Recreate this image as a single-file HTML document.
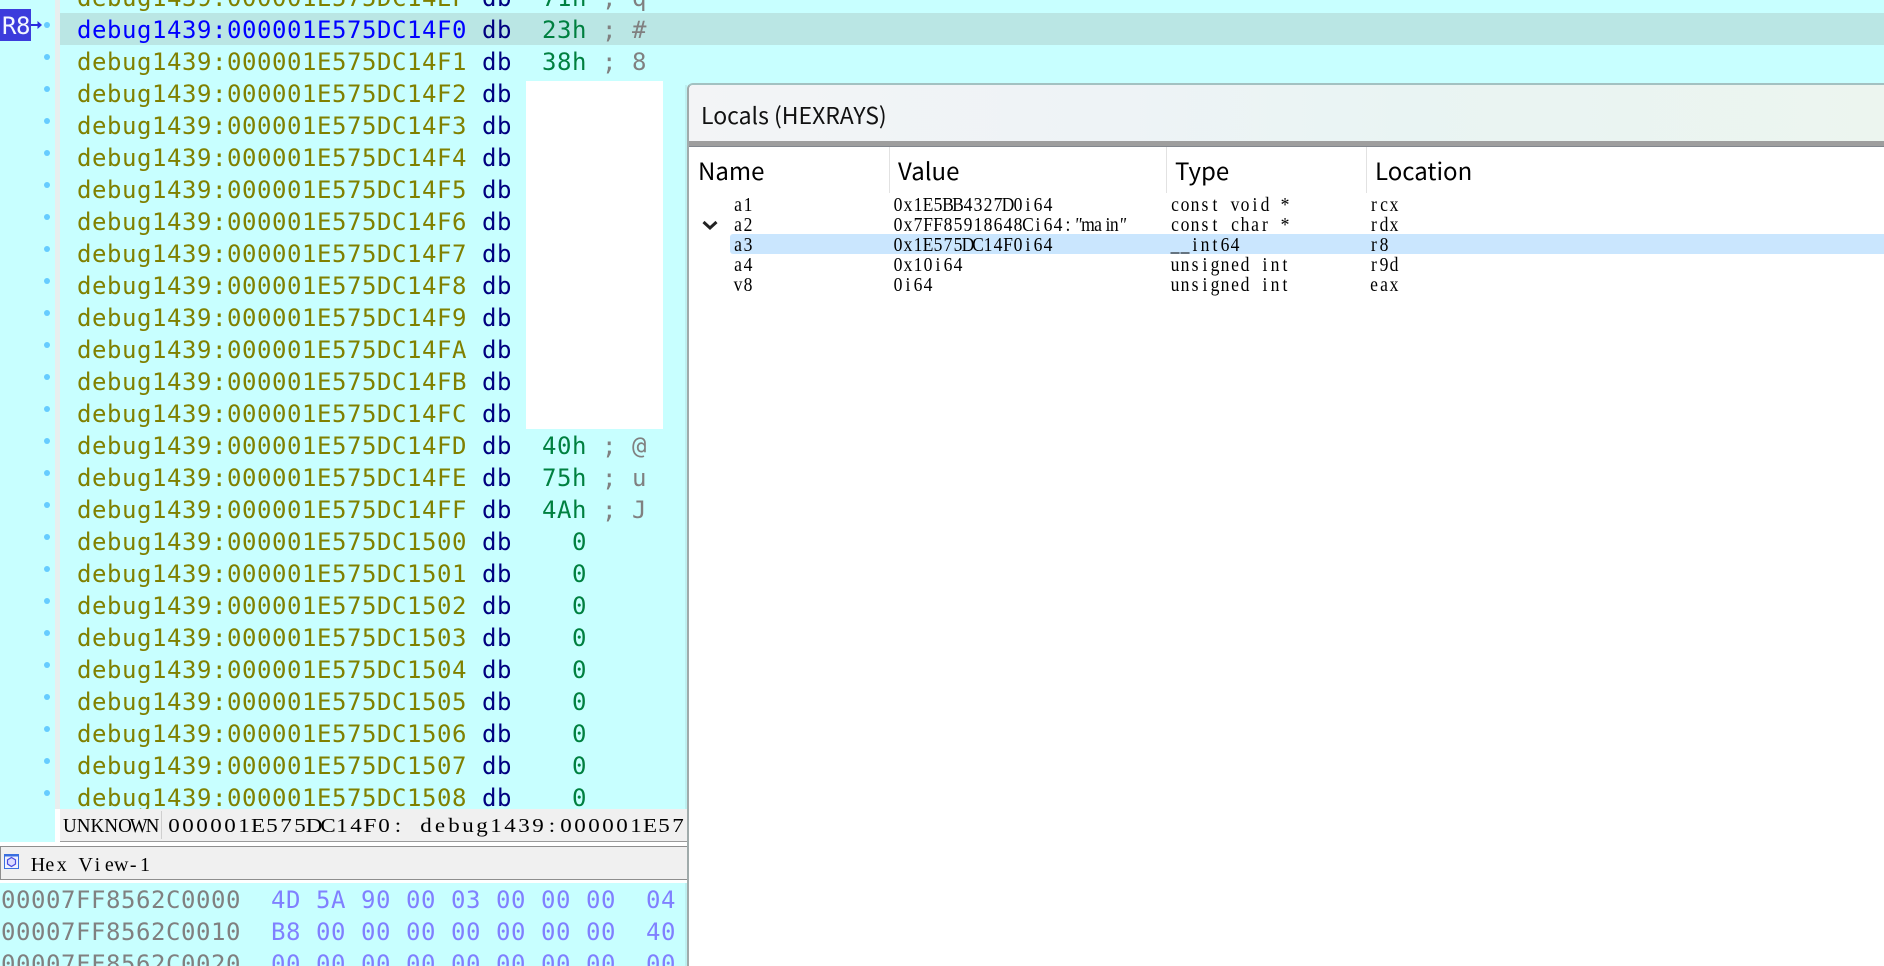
<!DOCTYPE html>
<html>
<head>
<meta charset="utf-8">
<title>Locals (HEXRAYS)</title>
<style>
html,body{margin:0;padding:0;background:#fff;}
#page{position:relative;width:1884px;height:966px;overflow:hidden;background:#fff;}
.abs{position:absolute;}
pre{margin:0;font-family:"DejaVu Sans Mono",monospace;font-size:24px;line-height:32px;letter-spacing:.55px;}
.a{color:#808000}.d{color:#000080}.g{color:#008040}.c{color:#808080}.b{color:#0000ff}.h{color:#8080ff}
.dot{position:absolute;left:44px;width:6px;height:6px;border-radius:50%;background:#66ccff;}
text{white-space:pre;}
.ss{font-family:"Liberation Serif",serif;font-size:20px;fill:#000;text-anchor:middle;}
.hd{position:absolute;top:154px;font-family:"Noto Sans CJK SC","Liberation Sans",sans-serif;font-size:24px;line-height:32px;color:#000;}
.vd{position:absolute;top:147px;width:1px;height:46px;background:#e2e2e2;}
</style>
</head>
<body>
<div id="page">
  <!-- left gutter -->
  <div class="abs" style="left:0;top:0;width:55px;height:842px;background:#c8ffff;"></div>
  <div class="abs" style="left:55px;top:0;width:5px;height:809px;background:#e8eeee;"></div>
  <!-- code area -->
  <div class="abs" style="left:60px;top:0;width:1824px;height:809px;background:#c8ffff;overflow:hidden;">
    <div class="abs" style="left:0;top:13px;width:1824px;height:32px;background:#bae6e4;"></div>
    <pre class="abs" style="left:17px;top:-18px;"><span class="a">debug1439:000001E575DC14EF</span> <span class="d">db</span>  <span class="g">71h</span> <span class="c">; q</span>
<span class="b">debug1439:000001E575DC14F0</span> <span class="d">db</span>  <span class="g">23h</span> <span class="c">; #</span>
<span class="a">debug1439:000001E575DC14F1</span> <span class="d">db</span>  <span class="g">38h</span> <span class="c">; 8</span>
<span class="a">debug1439:000001E575DC14F2</span> <span class="d">db</span>
<span class="a">debug1439:000001E575DC14F3</span> <span class="d">db</span>
<span class="a">debug1439:000001E575DC14F4</span> <span class="d">db</span>
<span class="a">debug1439:000001E575DC14F5</span> <span class="d">db</span>
<span class="a">debug1439:000001E575DC14F6</span> <span class="d">db</span>
<span class="a">debug1439:000001E575DC14F7</span> <span class="d">db</span>
<span class="a">debug1439:000001E575DC14F8</span> <span class="d">db</span>
<span class="a">debug1439:000001E575DC14F9</span> <span class="d">db</span>
<span class="a">debug1439:000001E575DC14FA</span> <span class="d">db</span>
<span class="a">debug1439:000001E575DC14FB</span> <span class="d">db</span>
<span class="a">debug1439:000001E575DC14FC</span> <span class="d">db</span>
<span class="a">debug1439:000001E575DC14FD</span> <span class="d">db</span>  <span class="g">40h</span> <span class="c">; @</span>
<span class="a">debug1439:000001E575DC14FE</span> <span class="d">db</span>  <span class="g">75h</span> <span class="c">; u</span>
<span class="a">debug1439:000001E575DC14FF</span> <span class="d">db</span>  <span class="g">4Ah</span> <span class="c">; J</span>
<span class="a">debug1439:000001E575DC1500</span> <span class="d">db</span>    <span class="g">0</span>
<span class="a">debug1439:000001E575DC1501</span> <span class="d">db</span>    <span class="g">0</span>
<span class="a">debug1439:000001E575DC1502</span> <span class="d">db</span>    <span class="g">0</span>
<span class="a">debug1439:000001E575DC1503</span> <span class="d">db</span>    <span class="g">0</span>
<span class="a">debug1439:000001E575DC1504</span> <span class="d">db</span>    <span class="g">0</span>
<span class="a">debug1439:000001E575DC1505</span> <span class="d">db</span>    <span class="g">0</span>
<span class="a">debug1439:000001E575DC1506</span> <span class="d">db</span>    <span class="g">0</span>
<span class="a">debug1439:000001E575DC1507</span> <span class="d">db</span>    <span class="g">0</span>
<span class="a">debug1439:000001E575DC1508</span> <span class="d">db</span>    <span class="g">0</span></pre>
    <div class="abs" style="left:466px;top:81px;width:137px;height:348px;background:#fff;"></div>
  </div>
  <!-- dots -->
  <div class="dot" style="top:22px"></div><div class="dot" style="top:54px"></div><div class="dot" style="top:86px"></div><div class="dot" style="top:118px"></div>
  <div class="dot" style="top:150px"></div><div class="dot" style="top:182px"></div><div class="dot" style="top:214px"></div><div class="dot" style="top:246px"></div>
  <div class="dot" style="top:278px"></div><div class="dot" style="top:310px"></div><div class="dot" style="top:342px"></div><div class="dot" style="top:374px"></div>
  <div class="dot" style="top:406px"></div><div class="dot" style="top:438px"></div><div class="dot" style="top:470px"></div><div class="dot" style="top:502px"></div>
  <div class="dot" style="top:534px"></div><div class="dot" style="top:566px"></div><div class="dot" style="top:598px"></div><div class="dot" style="top:630px"></div>
  <div class="dot" style="top:662px"></div><div class="dot" style="top:694px"></div><div class="dot" style="top:726px"></div><div class="dot" style="top:758px"></div>
  <div class="dot" style="top:790px"></div>
  <!-- R8 -->
  <div class="abs" style="left:0;top:9px;width:31px;height:32px;background:#3c3cdc;"></div>
  <pre class="abs" style="left:2px;top:10px;color:#f4f8ff;letter-spacing:-.4px;">R8</pre>
  <svg class="abs" style="left:31px;top:18px" width="12" height="14" viewBox="0 0 12 14"><path d="M0 7H9" stroke="#2a2ae0" stroke-width="2" fill="none"/><path d="M6.5 3L11 7L6.5 11Z" fill="#2a2ae0"/></svg>
  <!-- status bar -->
  <div class="abs" style="left:60px;top:809px;width:628px;height:32px;background:#f0f0f0;overflow:hidden;">
    <div class="abs" style="left:101px;top:2px;width:1px;height:28px;background:#cfcfcf;"></div>
    <svg class="abs" style="left:0;top:0" width="628" height="32">
      <text class="ss" transform="translate(3,23) scale(.95,1)" x="7.25 21.75 36.25 50.75 65.25 79.75 94.25">UNKNOWN</text>
      <text class="ss" transform="translate(107,23) scale(1.15,1)" x="6.09 18.26 30.43 42.61 54.78 66.96 79.13 91.3 103.48 115.65 127.83 140 152.17 164.35 176.52 188.7 200.87 213.04 225.22 237.39 249.57 261.74 273.91 286.09 298.26 310.43 322.61 334.78 346.96 359.13 371.3 383.48 395.65 407.83 420 432.17 444.35 456.52">000001E575DC14F0: debug1439:000001E575</text>
    </svg>
  </div>
  <div class="abs" style="left:60px;top:841px;width:628px;height:1px;background:#9a9a9a;"></div>
  <!-- hex view title -->
  <div class="abs" style="left:0;top:846px;width:688px;background:#f0f0f0;border-top:1px solid #8e8e8e;border-bottom:1px solid #8e8e8e;border-left:1px solid #8e8e8e;box-sizing:border-box;height:34px;"></div>
  <svg class="abs" style="left:4px;top:854px" width="15" height="15" viewBox="0 0 15 15">
    <rect x=".5" y=".5" width="14" height="14" fill="#eef2ff" stroke="#3a6fe0"/>
    <rect x="0" y="0" width="15" height="2.5" fill="#3a6fe0"/>
    <path d="M7.5 3.5L11.5 5.8V10L7.5 12.5L3.5 10V5.8Z" fill="#dcdcff" stroke="#4a4ae0" stroke-width="1.2"/>
  </svg>
  <svg class="abs" style="left:0;top:846px" width="300" height="34">
    <text class="ss" transform="translate(32,25)" x="5.95 17.85 29.75 41.65 53.55 65.45 77.35 89.25 101.15 113.05">Hex View-1</text>
  </svg>
  <!-- hex rows -->
  <div class="abs" style="left:0;top:883px;width:688px;height:83px;background:#c8ffff;overflow:hidden;">
    <pre class="abs" style="left:1px;top:1px;"><span class="c">00007FF8562C0000</span>  <span class="h">4D 5A 90 00 03 00 00 00  04</span>
<span class="c">00007FF8562C0010</span>  <span class="h">B8 00 00 00 00 00 00 00  40</span>
<span class="c">00007FF8562C0020</span>  <span class="h">00 00 00 00 00 00 00 00  00</span></pre>
  </div>
  <!-- locals panel -->
  <div class="abs" style="left:685px;top:85px;width:2px;height:724px;background:#bdf0f0;"></div>
  <div class="abs" style="left:685px;top:883px;width:2px;height:83px;background:#bdf0f0;"></div>
  <div class="abs" style="left:687px;top:83px;width:1197px;height:883px;background:#fff;border-left:2px solid #a0abab;border-top:2px solid #a3c1c1;box-sizing:border-box;border-top-left-radius:6px;"></div>
  <div class="abs" style="left:689px;top:85px;width:1195px;height:56px;background:linear-gradient(90deg,#f3f4f6 0%,#eef3f6 35%,#e9f4f3 60%,#ecf5ef 100%);border-top-left-radius:5px;"></div>
  <div class="abs" style="left:689px;top:141px;width:1195px;height:5px;background:#9e9e9e;"></div>
  <div class="abs" style="left:689px;top:146px;width:1195px;height:1px;background:#82878e;"></div>
  <div class="abs" style="left:701px;top:96px;font-family:'Noto Sans CJK SC','Liberation Sans',sans-serif;font-size:23px;line-height:36px;color:#111;">Locals (HEXRAYS)</div>
  <div class="vd" style="left:889px"></div><div class="vd" style="left:1166px"></div><div class="vd" style="left:1366px"></div>
  <div class="hd" style="left:698px">Name</div>
  <div class="hd" style="left:898px">Value</div>
  <div class="hd" style="left:1175px">Type</div>
  <div class="hd" style="left:1375px">Location</div>
  <div class="abs" style="left:730px;top:234px;width:1154px;height:20px;background:#cae6fe;border-radius:3px 0 0 3px;"></div>
  <svg class="abs" style="left:0;top:0" width="1884" height="966">
    <path d="M703.5 222L710 228L716.5 222" fill="none" stroke="#222" stroke-width="3"/>
    <g>
      <text class="ss" transform="translate(733,211) scale(.88,1)" x="5.68 17.05">a1</text>
      <text class="ss" transform="translate(733,231) scale(.88,1)" x="5.68 17.05">a2</text>
      <text class="ss" transform="translate(733,251) scale(.88,1)" x="5.68 17.05">a3</text>
      <text class="ss" transform="translate(733,271) scale(.88,1)" x="5.68 17.05">a4</text>
      <text class="ss" transform="translate(733,291) scale(.88,1)" x="5.68 17.05">v8</text>

      <text class="ss" transform="translate(893,211) scale(.88,1)" x="5.68 17.05 28.41 39.77 51.14 62.5 73.86 85.23 96.59 107.95 119.32 130.68 142.05 153.41 164.77 176.14">0x1E5BB4327D0i64</text>
      <text class="ss" transform="translate(893,231) scale(.88,1)" x="5.68 17.05 28.41 39.77 51.14 62.5 73.86 85.23 96.59 107.95 119.32 130.68 142.05 153.41 164.77 176.14 187.5 198.86 210.23 221.59 232.95 244.32 255.68">0x7FF85918648Ci64:<tspan font-style="italic">"</tspan>main<tspan font-style="italic">"</tspan></text>
      <text class="ss" transform="translate(893,251) scale(.88,1)" x="5.68 17.05 28.41 39.77 51.14 62.5 73.86 85.23 96.59 107.95 119.32 130.68 142.05 153.41 164.77 176.14">0x1E575DC14F0i64</text>
      <text class="ss" transform="translate(893,271) scale(.88,1)" x="5.68 17.05 28.41 39.77 51.14 62.5 73.86">0x10i64</text>
      <text class="ss" transform="translate(893,291) scale(.88,1)" x="5.68 17.05 28.41 39.77">0i64</text>

      <text class="ss" transform="translate(1170,211) scale(.88,1)" x="5.68 17.05 28.41 39.77 51.14 62.5 73.86 85.23 96.59 107.95 119.32 130.68">const void *</text>
      <text class="ss" transform="translate(1170,231) scale(.88,1)" x="5.68 17.05 28.41 39.77 51.14 62.5 73.86 85.23 96.59 107.95 119.32 130.68">const char *</text>
      <text class="ss" transform="translate(1170,251) scale(.88,1)" x="5.68 17.05 28.41 39.77 51.14 62.5 73.86">__int64</text>
      <text class="ss" transform="translate(1170,271) scale(.88,1)" x="5.68 17.05 28.41 39.77 51.14 62.5 73.86 85.23 96.59 107.95 119.32 130.68">unsigned int</text>
      <text class="ss" transform="translate(1170,291) scale(.88,1)" x="5.68 17.05 28.41 39.77 51.14 62.5 73.86 85.23 96.59 107.95 119.32 130.68">unsigned int</text>

      <text class="ss" transform="translate(1369,211) scale(.88,1)" x="5.68 17.05 28.41">rcx</text>
      <text class="ss" transform="translate(1369,231) scale(.88,1)" x="5.68 17.05 28.41">rdx</text>
      <text class="ss" transform="translate(1369,251) scale(.88,1)" x="5.68 17.05">r8</text>
      <text class="ss" transform="translate(1369,271) scale(.88,1)" x="5.68 17.05 28.41">r9d</text>
      <text class="ss" transform="translate(1369,291) scale(.88,1)" x="5.68 17.05 28.41">eax</text>
    </g>
  </svg>
</div>
</body>
</html>
